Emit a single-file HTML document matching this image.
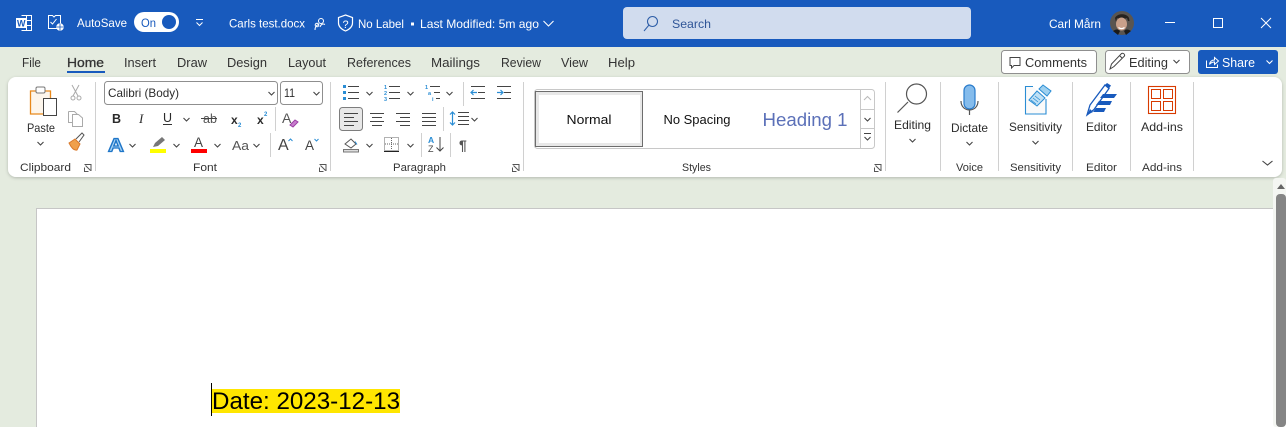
<!DOCTYPE html>
<html lang="en"><head><meta charset="utf-8"><title>Word</title>
<style>
html,body{margin:0;padding:0;width:1286px;height:427px;overflow:hidden;background:#e4ebdf}
svg{display:block}
text{font-family:"Liberation Sans",sans-serif;font-size:12px;fill:#2b2b2b}
.l{font-size:11px;fill:#333}
.t{font-size:12.5px;fill:#333}
.i{fill:none;stroke:#444;stroke-width:1}
.b{fill:none;stroke:#2a8dd4;stroke-width:1.2}
</style></head><body>
<svg width="1286" height="427" viewBox="0 0 1286 427" xmlns="http://www.w3.org/2000/svg">
<defs>
<filter id="sh" x="-2%" y="-10%" width="104%" height="125%"><feDropShadow dx="0" dy="1" stdDeviation="1.5" flood-color="#000" flood-opacity=".22"/></filter>
<path id="ch" d="M-3 -1.5L0 1.5L3 -1.5" fill="none" stroke="#444" stroke-width="1.1"/>
<path id="lau" d="M0 0h6.5v6.5M1 1l5 5M4 7H0V3" fill="none" stroke="#555" stroke-width="1"/>
</defs>
<rect width="1286" height="427" fill="#e4ebdf"/>
<!-- title bar -->
<rect width="1286" height="47" fill="#185abd"/>
<g fill="none" stroke="#fff" stroke-width="1">
<path d="M21.500 15.500h10v15h-10"/><path d="M26 20.500h5M26 25.500h5M26.500 15.500v15"/>
</g>
<rect x="16" y="18" width="10" height="10" fill="#fff"/>
<text x="17" y="26.500" style="font-size:9px;font-weight:700;fill:#185abd">W</text>
<g fill="none" stroke="#fff" stroke-width="1">
<path d="M57 28.500h-8.500v-13h4l1.500 1.500 1.500-1.500h5v8"/><path d="M50.500 22l2 2 4-5"/>
</g>
<circle cx="60" cy="27" r="3.800" fill="#fff"/><path d="M56.500 27h7M60 23.500v7" stroke="#185abd" stroke-width=".8"/>
<text x="77" y="27" textLength="50" lengthAdjust="spacingAndGlyphs" style="fill:#fff">AutoSave</text>
<rect x="134" y="12" width="45" height="20" rx="10" fill="#fff"/>
<text x="141" y="27" textLength="15" lengthAdjust="spacingAndGlyphs" style="fill:#185abd;font-size:12px">On</text>
<circle cx="169" cy="22" r="7" fill="#185abd"/>
<path d="M196 19.500h7M196.500 22.500l3 3 3-3" fill="none" stroke="#fff" stroke-width="1"/>
<text x="229" y="27.500" textLength="76" lengthAdjust="spacingAndGlyphs" style="fill:#fff">Carls test.docx</text>
<g fill="none" stroke="#fff" stroke-width="1"><circle cx="321" cy="21" r="2.500"/><path d="M315 30c0-4 2-5 3.500-5.500"/><circle cx="317" cy="25" r="1.800"/><path d="M320 27c1-3 3-3.500 5-2.500"/></g>
<path d="M345.500 15l7 2.500v5.500c0 4-3.500 6.500-7 8-3.500-1.500-7-4-7-8v-5.500z" fill="none" stroke="#fff" stroke-width="1.200"/>
<text x="342.500" y="28" style="fill:#fff;font-size:11px">?</text>
<text x="358" y="28" textLength="46" lengthAdjust="spacingAndGlyphs" style="fill:#fff">No Label</text>
<rect x="411" y="22.500" width="3" height="3" fill="#fff"/>
<text x="420" y="28" textLength="119" lengthAdjust="spacingAndGlyphs" style="fill:#fff">Last Modified: 5m ago</text>
<path d="M543.500 21l5 5 5-5" fill="none" stroke="#fff" stroke-width="1.100"/>
<!-- search -->
<rect x="623" y="7" width="348" height="32" rx="4" fill="#d1dcee"/>
<circle cx="652.500" cy="21.500" r="5" fill="none" stroke="#2f5fa8" stroke-width="1.100"/><path d="M649 25l-5 6" stroke="#2f5fa8" stroke-width="1"/>
<text x="672" y="28" textLength="39" lengthAdjust="spacingAndGlyphs" style="fill:#2f5597">Search</text>
<text x="1049" y="28" textLength="52" lengthAdjust="spacingAndGlyphs" style="fill:#fff">Carl Mårn</text>
<!-- avatar -->
<circle cx="1122" cy="23" r="12" fill="#5a5550"/>
<path d="M1115 18c2-5 12-5 14 0l.5 3h-1.500l-1-3c-3 1-7 1-10 0l-1 4z" fill="#26221f"/>
<ellipse cx="1121.500" cy="24" rx="5.500" ry="6.500" fill="#c9a08a"/>
<path d="M1118.500 27.500c2 1.500 4 1.500 6 0" stroke="#fff" stroke-width="1.200" fill="none"/>
<path d="M1113 31c3-2 5-2 7 0l-2 4zM1131 31c-3-2-5-2-7 0l2 4z" fill="#1a1a1a"/>
<!-- window controls -->
<path d="M1165 22.500h10" stroke="#fff" stroke-width="1"/>
<rect x="1213.500" y="18.500" width="9" height="9" fill="none" stroke="#fff" stroke-width="1"/>
<path d="M1261 18l10 10M1271 18l-10 10" stroke="#fff" stroke-width="1"/>
<!-- tabs -->
<text class="t" x="22" y="67" textLength="19" lengthAdjust="spacingAndGlyphs">File</text>
<text class="t" x="67" y="67" textLength="37" lengthAdjust="spacingAndGlyphs" style="stroke:#333;stroke-width:.3">Home</text>
<text class="t" x="124" y="67" textLength="32" lengthAdjust="spacingAndGlyphs">Insert</text>
<text class="t" x="177" y="67" textLength="30" lengthAdjust="spacingAndGlyphs">Draw</text>
<text class="t" x="227" y="67" textLength="40" lengthAdjust="spacingAndGlyphs">Design</text>
<text class="t" x="288" y="67" textLength="38" lengthAdjust="spacingAndGlyphs">Layout</text>
<text class="t" x="347" y="67" textLength="64" lengthAdjust="spacingAndGlyphs">References</text>
<text class="t" x="431" y="67" textLength="49" lengthAdjust="spacingAndGlyphs">Mailings</text>
<text class="t" x="501" y="67" textLength="40" lengthAdjust="spacingAndGlyphs">Review</text>
<text class="t" x="561" y="67" textLength="27" lengthAdjust="spacingAndGlyphs">View</text>
<text class="t" x="608" y="67" textLength="27" lengthAdjust="spacingAndGlyphs">Help</text>
<rect x="67" y="71" width="38" height="2" fill="#185abd"/>
<!-- top-right buttons -->
<rect x="1001.500" y="50.500" width="95" height="23" rx="3" fill="#fff" stroke="#8f8f8f"/>
<path d="M1010 57.500h10v8h-6l-2.500 2.500v-2.500h-1.500z" fill="none" stroke="#444"/>
<text class="t" x="1025" y="67" textLength="62" lengthAdjust="spacingAndGlyphs">Comments</text>
<rect x="1105.500" y="50.500" width="84" height="23" rx="3" fill="#fff" stroke="#8f8f8f"/>
<path d="M1110 69l1.500-5 10-10.500c2-1 3.500 1 3 2.500l-10.500 10.500z M1119.500 55.500l3 3" fill="none" stroke="#444"/>
<text class="t" x="1129" y="67" textLength="39" lengthAdjust="spacingAndGlyphs">Editing</text>
<use href="#ch" x="1176.500" y="61.500"/>
<rect x="1198" y="50" width="80" height="24" rx="3" fill="#185abd"/>
<path d="M1206.500 60.500v7h11v-3M1209.500 64.500c.5-3 2.500-4.500 5-4.500v-2.500l4 3.500-4 3.500v-2.500c-2 0-3.500.5-5 2.500z" fill="none" stroke="#fff"/>
<text x="1222" y="67" textLength="33" lengthAdjust="spacingAndGlyphs" style="fill:#fff;font-size:12.500px">Share</text>
<path d="M1266.500 60.500l3 3 3-3" fill="none" stroke="#fff" stroke-width="1.100"/>
<!-- ribbon -->
<rect x="8" y="77" width="1274" height="100" rx="8" fill="#fff" filter="url(#sh)"/>
<g fill="#d0d0d0">
<rect x="95" y="82" width="1" height="89"/><rect x="330" y="82" width="1" height="89"/><rect x="523" y="82" width="1" height="89"/>
<rect x="885" y="82" width="1" height="89"/><rect x="940" y="82" width="1" height="89"/><rect x="998" y="82" width="1" height="89"/>
<rect x="1072" y="82" width="1" height="89"/><rect x="1130" y="82" width="1" height="89"/><rect x="1193" y="82" width="1" height="89"/>
<rect x="275" y="107" width="1" height="24"/><rect x="270" y="133" width="1" height="24"/>
<rect x="463" y="82" width="1" height="24"/><rect x="443" y="107" width="1" height="24"/><rect x="421" y="133" width="1" height="24"/><rect x="450" y="133" width="1" height="24"/>
</g>
<!-- group labels -->
<text class="l" x="20" y="171" textLength="51" lengthAdjust="spacingAndGlyphs">Clipboard</text>
<text class="l" x="193" y="171" textLength="24" lengthAdjust="spacingAndGlyphs">Font</text>
<text class="l" x="393" y="171" textLength="53" lengthAdjust="spacingAndGlyphs">Paragraph</text>
<text class="l" x="682" y="171" textLength="29" lengthAdjust="spacingAndGlyphs">Styles</text>
<text class="l" x="956" y="171" textLength="27" lengthAdjust="spacingAndGlyphs">Voice</text>
<text class="l" x="1010" y="171" textLength="51" lengthAdjust="spacingAndGlyphs">Sensitivity</text>
<text class="l" x="1086" y="171" textLength="31" lengthAdjust="spacingAndGlyphs">Editor</text>
<text class="l" x="1142" y="171" textLength="40" lengthAdjust="spacingAndGlyphs">Add-ins</text>
<use href="#lau" x="84.500" y="164.500"/><use href="#lau" x="319.500" y="164.500"/><use href="#lau" x="512.500" y="164.500"/><use href="#lau" x="874.500" y="164.500"/>
<!-- clipboard -->
<path d="M30.500 91h20v23h-20z" fill="#fdf6ec" stroke="#e8891c" stroke-width="1.300"/>
<rect x="36" y="87" width="9" height="6" rx="1.500" fill="#fff" stroke="#777"/>
<rect x="43.500" y="98.500" width="13" height="17" fill="#fff" stroke="#444" stroke-width="1"/>
<text x="27" y="132" textLength="28" lengthAdjust="spacingAndGlyphs">Paste</text>
<use href="#ch" x="40.500" y="143.500"/>
<path d="M72 85l6 11M79 85l-6 11" stroke="#aaa" fill="none"/><circle cx="73" cy="98" r="2" fill="none" stroke="#aaa"/><circle cx="79" cy="98" r="2" fill="none" stroke="#aaa"/>
<path d="M68.500 111.500h6l3 3v8M74 122.500h-5.500v-11" fill="none" stroke="#aaa"/><path d="M72.500 114.500h6l4 3.500v8.500h-10z" fill="#fff" stroke="#aaa"/>
<path d="M69 143l6-4 5 5-3 6c-3 1-6-3-8-7z" fill="#f0a04b" stroke="#d9782a"/><path d="M76 139l6-6 2 2-5 7" fill="#fff" stroke="#555"/>
<!-- font boxes -->
<rect x="104.500" y="81.500" width="173" height="23" rx="3" fill="#fff" stroke="#8f8f8f"/>
<text x="108" y="97" textLength="71" lengthAdjust="spacingAndGlyphs">Calibri (Body)</text>
<use href="#ch" x="271.500" y="93.500"/>
<rect x="280.500" y="81.500" width="42" height="23" rx="3" fill="#fff" stroke="#8f8f8f"/>
<text x="284" y="97" textLength="11" lengthAdjust="spacingAndGlyphs">11</text>
<use href="#ch" x="316.500" y="93.500"/>
<text x="112" y="123" style="font-weight:700;font-size:12.500px">B</text>
<text x="139" y="123" style="font-style:italic;font-family:'Liberation Serif',serif;font-size:13px">I</text>
<text x="163" y="122" style="font-size:12.500px">U</text><rect x="163" y="124" width="9" height="1" fill="#333"/>
<use href="#ch" x="186.500" y="119.500"/>
<text x="203" y="123" style="font-size:12.500px;fill:#555">ab</text><path d="M201 118.500h16" stroke="#444"/>
<text x="231" y="124" style="font-weight:700;font-size:12px">x</text><text x="238" y="127" style="font-size:6px;font-weight:700;fill:#2a8dd4">2</text>
<text x="257" y="124" style="font-weight:700;font-size:12px">x</text><text x="264" y="116" style="font-size:6px;font-weight:700;fill:#2a8dd4">2</text>
<text x="282" y="123" style="font-size:14px;fill:#555">A</text><path d="M290 125l5-5 3 2-5 5z" fill="#c77dcc" stroke="#9b3fa5"/>
<text x="108" y="151.500" textLength="16" lengthAdjust="spacingAndGlyphs" style="font-size:18px;font-weight:700;fill:#a9d4f5;stroke:#1f76c8;stroke-width:1.200">A</text>
<use href="#ch" x="132.500" y="145.500"/>
<path d="M153 147l2-4 7-6 3 3-7 6z" fill="#777"/><rect x="150" y="149" width="16" height="4" fill="#ff0"/>
<use href="#ch" x="176.500" y="145.500"/>
<text x="194" y="147" style="font-size:13.500px;fill:#444">A</text><rect x="191" y="149" width="16" height="4" fill="#f00"/>
<use href="#ch" x="217.500" y="145.500"/>
<text x="232" y="150" textLength="17" lengthAdjust="spacingAndGlyphs" style="font-size:13px;fill:#555">Aa</text>
<use href="#ch" x="256.500" y="145.500"/>
<text x="278" y="150" style="font-size:16px;fill:#444">A</text><path d="M288.500 141l2-2 2 2" fill="none" stroke="#2a8dd4"/>
<text x="305" y="150" style="font-size:13.500px;fill:#444">A</text><path d="M314.500 139l2 2 2-2" fill="none" stroke="#2a8dd4"/>
<!-- paragraph row 1 -->
<g fill="#2a8dd4"><rect x="343" y="85" width="3" height="3"/><rect x="343" y="91" width="3" height="3"/><rect x="343" y="97" width="3" height="3"/></g>
<path d="M348 86.500h11M348 92.500h11M348 98.500h11" class="i"/>
<use href="#ch" x="369.500" y="93.500"/>
<text x="384" y="89" style="font-size:5.500px;font-weight:700;fill:#2a8dd4">1</text><text x="384" y="95" style="font-size:5.500px;font-weight:700;fill:#2a8dd4">2</text><text x="384" y="101" style="font-size:5.500px;font-weight:700;fill:#2a8dd4">3</text>
<path d="M389 86.500h11M389 92.500h11M389 98.500h11" class="i"/>
<use href="#ch" x="410.500" y="93.500"/>
<text x="425" y="89" style="font-size:5.500px;font-weight:700;fill:#2a8dd4">1</text><text x="428" y="95" style="font-size:5.500px;font-weight:700;fill:#2a8dd4">a</text><text x="432" y="101" style="font-size:5.500px;font-weight:700;fill:#2a8dd4">i</text>
<path d="M430 86.500h10M434 92.500h6M436 98.500h4" class="i"/>
<use href="#ch" x="449.500" y="93.500"/>
<path d="M471 86.500h14M478 92.500h7M471 98.500h14" class="i"/><path d="M477 92.500h-6M473.500 90l-2.500 2.500 2.500 2.500" class="b"/>
<path d="M497 86.500h14M504 92.500h7M497 98.500h14" class="i"/><path d="M497 92.500h6M500.500 90l2.500 2.500-2.500 2.500" class="b"/>
<!-- row 2 -->
<rect x="339.500" y="107.500" width="23" height="23" rx="3" fill="#e8e8e8" stroke="#7d7d7d"/>
<path d="M344 113.500h14M344 117.500h10M344 121.500h14M344 125.500h10" class="i"/>
<path d="M370 113.500h14M372 117.500h10M370 121.500h14M372 125.500h10" class="i"/>
<path d="M396 113.500h14M400 117.500h10M396 121.500h14M400 125.500h10" class="i"/>
<path d="M422 113.500h14M422 117.500h14M422 121.500h14M422 125.500h14" class="i"/>
<path d="M452.500 112v13M450 114.500l2.500-2.500 2.500 2.500M450 122.500l2.500 2.500 2.500-2.500" class="b"/>
<path d="M458 112.500h11M458 116.500h11M458 120.500h11M458 124.500h11" class="i"/>
<use href="#ch" x="474.500" y="119.500"/>
<!-- row 3 -->
<path d="M345 144l6-5 5 5-5 4z" fill="#fff" stroke="#555"/><path d="M355 141.500l2 3" stroke="#2a8dd4"/><rect x="343.500" y="149.500" width="15" height="2.500" fill="#ddd" stroke="#777"/>
<use href="#ch" x="369.500" y="145.500"/>
<rect x="384.500" y="137.500" width="14" height="13" fill="none" stroke="#666" stroke-dasharray="1 1"/><path d="M391.500 138v12M385 144h13" stroke="#666" stroke-dasharray="1 1"/><path d="M384 151.500h15" stroke="#222"/>
<use href="#ch" x="410.500" y="145.500"/>
<text x="428" y="143" style="font-size:8.500px;font-weight:700;fill:#2a8dd4">A</text><text x="428" y="152" style="font-size:9px;fill:#444">Z</text>
<path d="M440 137v14M436.500 147.500l3.500 3.500 3.500-3.500" class="i"/>
<text x="459" y="150" style="font-size:14px;font-weight:700;fill:#555">¶</text>
<!-- styles gallery -->
<rect x="534.500" y="89.500" width="340" height="59" rx="3" fill="#fff" stroke="#c8c8c8"/>
<rect x="535.500" y="91.500" width="107" height="55" fill="#e8e8e8" stroke="#6d6d6d"/><rect x="539" y="95" width="101" height="48" fill="#fff"/>
<text x="566.500" y="124" textLength="45" lengthAdjust="spacingAndGlyphs" style="font-size:13px;fill:#111">Normal</text>
<text x="663.500" y="124" textLength="67" lengthAdjust="spacingAndGlyphs" style="font-size:13px;fill:#111">No Spacing</text>
<text x="762.500" y="126" textLength="85" lengthAdjust="spacingAndGlyphs" style="font-size:18px;fill:#5b70b8">Heading 1</text>
<path d="M860.500 89.500v59M860.500 109.500h14M860.500 128.500h14" fill="none" stroke="#c8c8c8"/>
<path d="M864 100l3.500-3.500 3.500 3.500" fill="none" stroke="#bbb" stroke-width="1.100"/>
<use href="#ch" x="867.500" y="119.500"/>
<path d="M864 133.500h7" stroke="#444"/><use href="#ch" x="867.500" y="138.500"/>
<!-- editing -->
<circle cx="916.500" cy="94" r="10" fill="#fff" stroke="#555" stroke-width="1.200"/><path d="M908 102l-10.500 10.500" stroke="#555" stroke-width="1.200"/>
<text x="894" y="129" textLength="37" lengthAdjust="spacingAndGlyphs">Editing</text>
<use href="#ch" x="912.500" y="140.500"/>
<!-- dictate -->
<rect x="964" y="85" width="11" height="24" rx="5.500" fill="#85bcec" stroke="#2a7ccc" stroke-width="1.200"/>
<path d="M961 101c0 12 17 12 17 0M969.500 110v5" fill="none" stroke="#555" stroke-width="1.200"/>
<text x="951" y="132" textLength="37" lengthAdjust="spacingAndGlyphs">Dictate</text>
<use href="#ch" x="969.500" y="143.500"/>
<!-- sensitivity -->
<path d="M1033 86.500h-7.500v27.500h20.500v-15" fill="#fafafa" stroke="#2a8dd4" stroke-width="1.100"/>
<path d="M1029 100l8-9 8 7-8 8z" fill="#bfe0f5" stroke="#2a8dd4"/><path d="M1033 98l5 4M1031 100l5 4M1035 96l5 4" stroke="#2a8dd4" stroke-width=".8"/>
<path d="M1039 89l4-4 8 6-4 5z" fill="#9ed0ef" stroke="#2a8dd4"/>
<text x="1009" y="131" textLength="53" lengthAdjust="spacingAndGlyphs">Sensitivity</text>
<use href="#ch" x="1035.500" y="142.500"/>
<!-- editor -->
<path d="M1087 115l3-10 15-20 4 3.500-15 21z" fill="#fff" stroke="#185abd" stroke-width="1.300"/>
<path d="M1105 85l4 3.500 2-3-4-2.500z" fill="#185abd"/>
<path d="M1103 94h14l-3 4h-14zM1099 101h13l-2 4h-14zM1096 108h10l-2 4h-11zM1087 115l3-6 3 3z" fill="#185abd"/>
<text x="1086" y="131" textLength="31" lengthAdjust="spacingAndGlyphs">Editor</text>
<!-- add-ins -->
<rect x="1148.500" y="86.500" width="27" height="27" fill="none" stroke="#d83b01" stroke-width="1.100"/>
<g fill="none" stroke="#d83b01"><rect x="1151.500" y="89.500" width="9" height="9"/><rect x="1163.500" y="89.500" width="9" height="9"/><rect x="1151.500" y="101.500" width="9" height="9"/><rect x="1163.500" y="101.500" width="9" height="9"/></g>
<text x="1141" y="131" textLength="42" lengthAdjust="spacingAndGlyphs">Add-ins</text>
<path d="M1262.500 161l5 4 5-4" fill="none" stroke="#444" stroke-width="1.100"/>
<!-- document -->
<rect x="36.500" y="208.500" width="1250" height="230" fill="#fff" stroke="#c6c6c6"/>
<rect x="212" y="389" width="188" height="24" fill="#ffe600"/>
<text x="212" y="409" textLength="188" lengthAdjust="spacingAndGlyphs" style="font-size:24px;fill:#000">Date: 2023-12-13</text>
<rect x="211" y="383" width="1" height="33" fill="#000"/>
<!-- scrollbar -->
<rect x="1273" y="178" width="13" height="249" rx="3" fill="#f4f6f2"/>
<path d="M1277 189l4-5 4 5z" fill="#666"/>
<rect x="1276" y="194" width="10" height="233" rx="4" fill="#858585"/>
</svg>
</body></html>
